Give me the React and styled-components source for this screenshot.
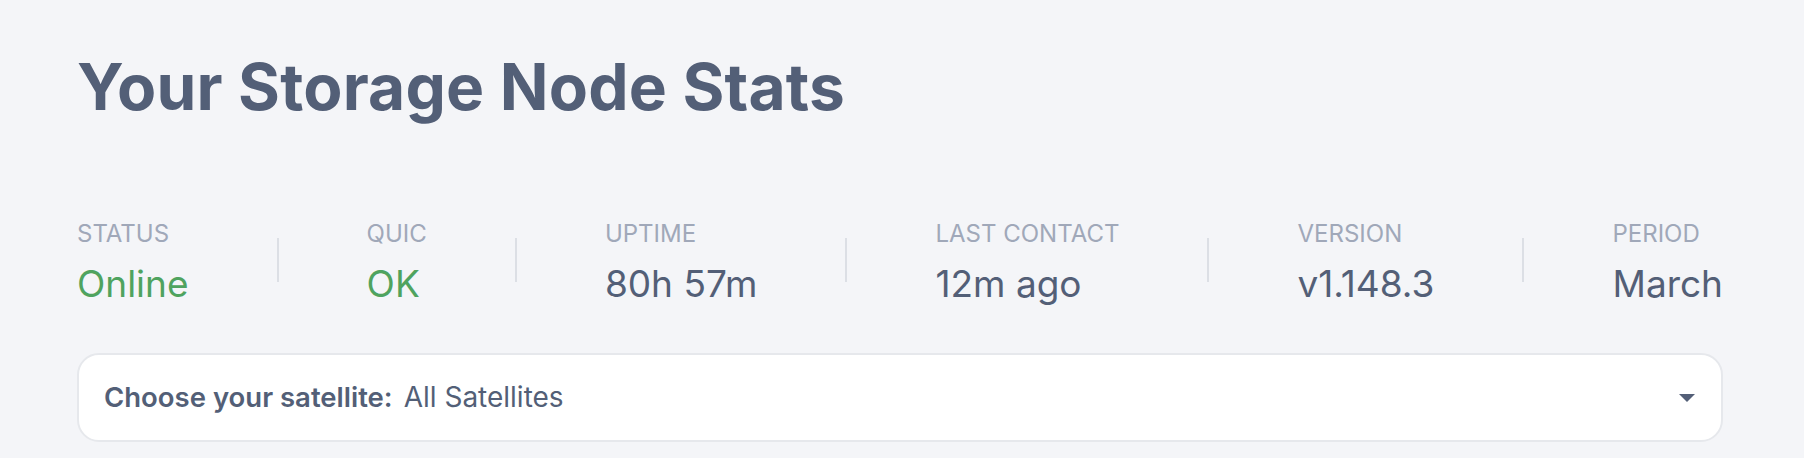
import styled, { createGlobalStyle } from 'styled-components';

const GlobalStyle = createGlobalStyle`
  html, body {
    margin: 0;
    padding: 0;
    background: #f4f5f8;
    font-family: Inter, "Noto Sans", sans-serif;
  }
`;

const Page = styled.div`
  min-height: 458px;
  box-sizing: border-box;
  padding: 55px 81px 0 77px;
  background: #f4f5f8;
`;

const Title = styled.h1`
  margin: 0;
  font-size: 64px;
  line-height: 64px;
  font-weight: 700;
  letter-spacing: 0.2px;
  color: #535f77;
`;

const StatsRow = styled.div`
  display: flex;
  justify-content: space-between;
  align-items: center;
  margin-top: 103px;
`;

const Stat = styled.div`
  display: flex;
  flex-direction: column;
  gap: 20px;
`;

const Label = styled.span`
  font-size: 24px;
  line-height: 24px;
  color: #a0a8b9;
  text-transform: uppercase;
`;

const Value = styled.span`
  font-size: 37px;
  line-height: 36px;
  color: ${(p) => (p.$ok ? '#4fa35f' : '#535f77')};
`;

const Divider = styled.div`
  width: 2px;
  height: 44px;
  background: #dcdfe5;
  margin-top: -4px;
`;

const Select = styled.div`
  margin-top: 51px;
  height: 89px;
  box-sizing: border-box;
  background: #ffffff;
  border: 2px solid #e6e8ec;
  border-radius: 22px;
  display: flex;
  align-items: center;
  justify-content: space-between;
  padding: 0 26px 1px 25px;
`;

const SelectText = styled.div`
  font-size: 27.5px;
  color: #535f77;
  display: flex;
  align-items: baseline;
  gap: 11px;
`;

const SelectLabel = styled.span`
  font-weight: 600;
`;

const SelectValue = styled.span`
  font-size: 28px;
  font-weight: 400;
`;

const Caret = styled.div`
  width: 0;
  height: 0;
  border-left: 8px solid transparent;
  border-right: 8px solid transparent;
  border-top: 8px solid #535f77;
  margin-top: 1px;
`;

const stats = [
  { label: 'Status', value: 'Online', ok: true },
  { label: 'QUIC', value: 'OK', ok: true },
  { label: 'Uptime', value: '80h 57m' },
  { label: 'Last Contact', value: '12m ago' },
  { label: 'Version', value: 'v1.148.3' },
  { label: 'Period', value: 'March' },
];

export default function App() {
  return (
    <Page>
      <GlobalStyle />
      <Title>Your Storage Node Stats</Title>
      <StatsRow>
        {stats.map((s, i) => [
          i > 0 && <Divider key={'d' + i} />,
          <Stat key={s.label}>
            <Label>{s.label}</Label>
            <Value $ok={s.ok}>{s.value}</Value>
          </Stat>,
        ])}
      </StatsRow>
      <Select>
        <SelectText>
          <SelectLabel>Choose your satellite:</SelectLabel>
          <SelectValue>All Satellites</SelectValue>
        </SelectText>
        <Caret />
      </Select>
    </Page>
  );
}
